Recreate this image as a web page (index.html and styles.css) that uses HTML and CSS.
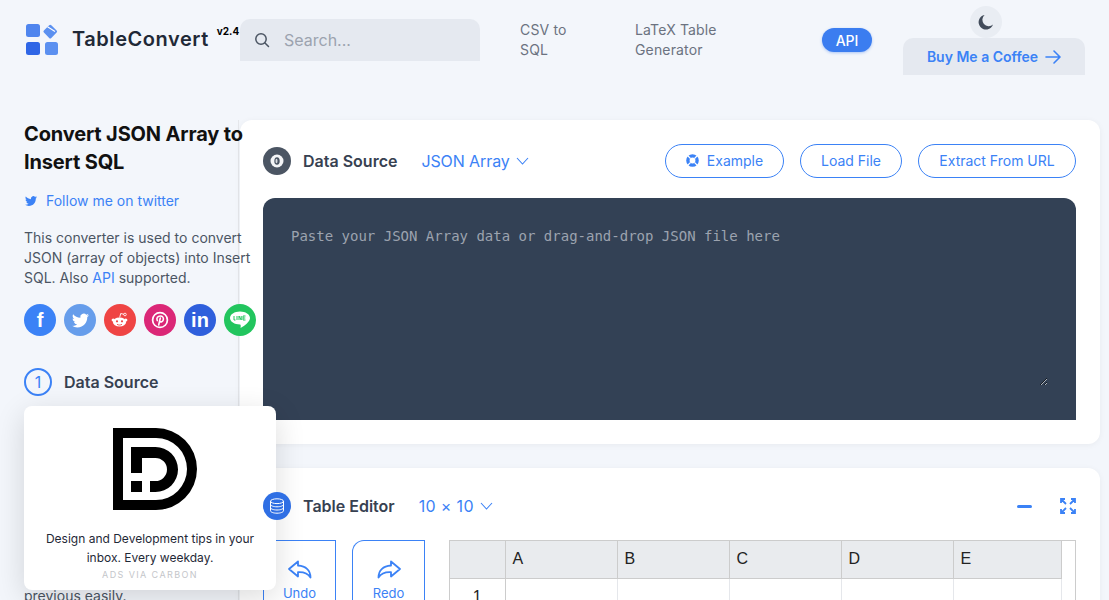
FILE: index.html
```html
<!DOCTYPE html>
<html lang="en">
<head>
<meta charset="utf-8">
<title>Convert JSON Array to Insert SQL</title>
<link rel="stylesheet" href="styles.css">
</head>
<body>
<header class="topbar">
  <a class="brand">
    <svg class="brand-logo" width="32" height="32" viewBox="0 0 32 32">
      <rect x="0" y="0" width="14" height="13" rx="2.5" fill="#4f85ee"/>
      <rect x="19" y="2.300" width="10.500" height="10.500" rx="1.500" fill="#5b90f0" transform="rotate(45 24.250 7.550)"/>
      <path d="M21.500 2.800l7.500 4.700" stroke="#fff" stroke-width="1.100"/>
      <rect x="0" y="18" width="14" height="13" rx="2.5" fill="#2f66e6"/>
      <rect x="19" y="18" width="13" height="13" rx="2.5" fill="#5b90f0"/>
    </svg>
    <span class="brand-name">TableConvert</span>
    <sup class="brand-version">v2.4</sup>
  </a>
  <div class="search">
    <svg width="16" height="16" viewBox="0 0 16 16" fill="none" stroke="#4b5563" stroke-width="1.5" stroke-linecap="round"><circle cx="7" cy="7" r="5.2"/><path d="M11 11l3.5 3.5"/></svg>
    <span class="search-text">Search...</span>
  </div>
  <nav class="nav">
    <a class="nav-link nav-csv">CSV to SQL</a>
    <a class="nav-link nav-latex">LaTeX Table Generator</a>
    <a class="api-pill">API</a>
  </nav>
  <div class="top-actions">
    <span class="moon">
      <svg width="16" height="16" viewBox="0 0 16 16"><path fill="#414b5a" d="M6.600.9A7.400 7.400 0 1 0 15 10.600a6.200 6.200 0 0 1-8.400-9.700z"/></svg>
    </span>
    <a class="coffee">Buy Me a Coffee
      <svg width="16" height="14" viewBox="0 0 16 14" fill="none" stroke="#3b82f6" stroke-width="1.6" stroke-linecap="round" stroke-linejoin="round"><path d="M1 7h13.500M9 1l6 6-6 6"/></svg>
    </a>
  </div>
</header>

<div class="page">
  <aside class="side">
    <h1 class="side-title">Convert JSON Array to Insert SQL</h1>
    <a class="follow">
      <svg width="12" height="12" viewBox="0 0 24 24"><path fill="#3b82f6" d="M23.953 4.57a10 10 0 01-2.825.775 4.958 4.958 0 002.163-2.723c-.951.555-2.005.959-3.127 1.184a4.92 4.92 0 00-8.384 4.482C7.69 8.095 4.067 6.13 1.64 3.162a4.822 4.822 0 00-.666 2.475c0 1.71.87 3.213 2.188 4.096a4.904 4.904 0 01-2.228-.616v.06a4.923 4.923 0 003.946 4.827 4.996 4.996 0 01-2.212.085 4.936 4.936 0 004.604 3.417 9.867 9.867 0 01-6.102 2.105c-.39 0-.779-.023-1.17-.067a13.995 13.995 0 007.557 2.209c9.053 0 13.998-7.496 13.998-13.985 0-.21 0-.42-.015-.63A9.935 9.935 0 0024 4.59z"/></svg>
      Follow me on twitter
    </a>
    <p class="intro">This converter is used to convert JSON (array of objects) into Insert SQL. Also <a class="intro-link">API</a> supported.</p>
    <div class="socials">
      <a class="social social-fb">f</a>
      <a class="social social-tw"><svg width="17" height="17" viewBox="0 0 24 24"><path fill="#fff" d="M23.953 4.57a10 10 0 01-2.825.775 4.958 4.958 0 002.163-2.723c-.951.555-2.005.959-3.127 1.184a4.92 4.92 0 00-8.384 4.482C7.69 8.095 4.067 6.13 1.64 3.162a4.822 4.822 0 00-.666 2.475c0 1.71.87 3.213 2.188 4.096a4.904 4.904 0 01-2.228-.616v.06a4.923 4.923 0 003.946 4.827 4.996 4.996 0 01-2.212.085 4.936 4.936 0 004.604 3.417 9.867 9.867 0 01-6.102 2.105c-.39 0-.779-.023-1.17-.067a13.995 13.995 0 007.557 2.209c9.053 0 13.998-7.496 13.998-13.985 0-.21 0-.42-.015-.63A9.935 9.935 0 0024 4.59z"/></svg></a>
      <a class="social social-rd"><svg width="20" height="20" viewBox="0 0 20 20"><ellipse cx="9.500" cy="12" rx="6.600" ry="4.600" fill="#fff"/><circle cx="3.200" cy="10" r="1.600" fill="#fff"/><circle cx="15.800" cy="10" r="1.600" fill="#fff"/><circle cx="7" cy="11.300" r="1.100" fill="#ef4444"/><circle cx="12" cy="11.300" r="1.100" fill="#ef4444"/><path d="M7 14.300c1.500 1 3.500 1 5 0" stroke="#ef4444" stroke-width=".9" fill="none"/><path d="M9.700 7.500l1-4 3.300.8" stroke="#fff" stroke-width=".9" fill="none"/><circle cx="15" cy="4.500" r="1.300" fill="none" stroke="#fff" stroke-width=".8"/></svg></a>
      <a class="social social-pin"><svg width="18" height="18" viewBox="0 0 18 18" fill="none" stroke="#fff"><circle cx="9" cy="9" r="7.400" stroke-width="1.700"/><path d="M7.700 14l1.600-7M6.300 9.600C5 7 7 5 9.300 5c2.300 0 3.500 1.700 3 3.800-.5 2-2.400 2.700-3.800 1.500" stroke-width="1.600" stroke-linecap="round"/></svg></a>
      <a class="social social-in">in</a>
      <a class="social social-line"><svg width="22" height="20" viewBox="0 0 22 20"><path fill="#fff" d="M11 1.500c5.500 0 10 2.900 10 6.500 0 3.500-5 7.500-9.500 10 .4-1.500.4-3.500-.5-3.500-5.500 0-10-2.900-10-6.500s4.500-6.500 10-6.500z"/><path d="M5 6v4h1.500M8 6v4M10 10V6l2.200 4V6M16.500 6H14v4h2.500M14 8h2.300" stroke="#22c55e" stroke-width="1" fill="none"/></svg></a>
    </div>
    <div class="step">
      <span class="step-num">1</span>
      <span class="step-title">Data Source</span>
    </div>
    <p class="step-note">previous easily.</p>
  </aside>

  <main class="main">
    <section class="card card-source">
      <div class="card-head">
        <span class="round round-dark">
          <svg width="16" height="16" viewBox="0 0 16 16"><circle cx="8" cy="8" r="6.500" fill="#f4f5f7"/><ellipse cx="8" cy="8" rx="2.700" ry="3.800" fill="#4b5563"/><ellipse cx="7.500" cy="8" rx="1" ry="2.200" fill="#d9dce1"/></svg>
        </span>
        <h2 class="card-title">Data Source</h2>
        <a class="picker picker-json">JSON Array
          <svg width="13" height="8" viewBox="0 0 13 8" fill="none" stroke="#3b82f6" stroke-width="1.100"><path d="M1 1l5.500 6L12 1"/></svg>
        </a>
        <div class="card-actions">
          <a class="pill pill-example">
            <svg width="13" height="13" viewBox="0 0 13 13"><circle cx="6.500" cy="6.500" r="4.600" fill="none" stroke="#3b82f6" stroke-width="3.400"/><path d="M1.500 1.500l3 3M11.500 1.500l-3 3M1.500 11.500l3-3M11.500 11.500l-3-3" stroke="#fff" stroke-width="1.200"/></svg>
            Example</a>
          <a class="pill pill-load">Load File</a>
          <a class="pill pill-url">Extract From URL</a>
        </div>
      </div>
      <div class="editor">
        <textarea class="editor-input" placeholder="Paste your JSON Array data or drag-and-drop JSON file here"></textarea>
      </div>
    </section>

    <section class="card card-table">
      <div class="card-head card-head-table">
        <span class="round round-blue">
          <svg width="16" height="16" viewBox="0 0 16 16" fill="none" stroke="#fff" stroke-width="1"><ellipse cx="8" cy="3.200" rx="6.500" ry="2.400"/><path d="M1.500 3.200v9.600c0 1.300 2.900 2.400 6.500 2.400s6.500-1.100 6.500-2.400V3.200M1.500 6.400c0 1.300 2.900 2.400 6.500 2.400s6.500-1.100 6.500-2.400M1.500 9.600c0 1.300 2.900 2.400 6.500 2.400s6.500-1.100 6.500-2.400"/></svg>
        </span>
        <h2 class="card-title">Table Editor</h2>
        <a class="picker picker-size">10 × 10
          <svg width="13" height="8" viewBox="0 0 13 8" fill="none" stroke="#3b82f6" stroke-width="1.100"><path d="M1 1l5.500 6L12 1"/></svg>
        </a>
        <div class="table-tools">
          <span class="tool-minus"></span>
          <svg width="16" height="16" viewBox="0 0 16 16" fill="none" stroke="#3b82f6" stroke-width="1.800"><path d="M1 5V1h4M1 1l5 5M11 1h4v4M15 1l-5 5M1 11v4h4M1 15l5-5M15 11v4h-4M15 15l-5-5"/></svg>
        </div>
      </div>
      <div class="table-body">
        <div class="history">
          <a class="history-btn">
            <svg width="26" height="20" viewBox="0 0 26 20" fill="none" stroke="#3b82f6" stroke-width="1.800" stroke-linejoin="round"><path d="M11 1.500L2 9l9 7.500v-4.300c5-.3 9.500.6 12.500 5.300 0-7-4.500-11.500-12.500-12z"/></svg>
            <span>Undo</span>
          </a>
          <a class="history-btn">
            <svg width="26" height="20" viewBox="0 0 26 20" fill="none" stroke="#3b82f6" stroke-width="1.800" stroke-linejoin="round"><path d="M15 1.500L24 9l-9 7.500v-4.300c-5-.3-9.500.6-12.500 5.300 0-7 4.500-11.500 12.500-12z"/></svg>
            <span>Redo</span>
          </a>
        </div>
        <div class="sheet">
          <table class="grid">
            <thead>
              <tr><th class="corner"></th><th>A</th><th>B</th><th>C</th><th>D</th><th class="last">E</th></tr>
            </thead>
            <tbody>
              <tr><th class="rownum">1</th><td></td><td></td><td></td><td></td><td class="last"></td></tr>
            </tbody>
          </table>
        </div>
      </div>
    </section>
  </main>
</div>

<div class="ad">
  <svg class="ad-logo" width="84" height="82" viewBox="0 0 84 82">
    <path fill="#000" fill-rule="evenodd" d="M0 0H43A41 41 0 0 1 43 82H0ZM10 10V72H43A31 31 0 0 0 43 10Z"/>
    <path fill="#000" d="M18 19H42.500A22.500 22.500 0 0 1 42.500 64H37V53H42.500A11.500 11.500 0 0 0 42.500 30H29V45H18Z"/>
    <rect x="18" y="53" width="11" height="11" fill="#000"/>
  </svg>
  <p class="ad-text">Design and Development tips in your inbox. Every weekday.</p>
  <p class="ad-via">ads via Carbon</p>
</div>
</body>
</html>
```

FILE: styles.css
```css
* { box-sizing: border-box; }
html, body { margin: 0; height: 600px; overflow: hidden; }
body {
  position: relative;
  background: #f3f6fb;
  font-family: Inter, "Liberation Sans", sans-serif;
  color: #1f2937;
  font-size: 14px;
}
h1, h2, p { margin: 0; }

/* top bar */
.topbar { display: flex; height: 120px; padding-left: 26px; }
.brand { display: flex; align-items: flex-start; width: 214px; padding-top: 24px; }
.brand-logo { flex: none; }
.brand-name { margin-left: 14px; margin-top: 3px; font-size: 20px; line-height: 24px; font-weight: 600; letter-spacing: .55px; color: #1f2937; }
.brand-version { margin-left: 8px; margin-top: 0; font-size: 10px; line-height: 14px; font-weight: 700; color: #000; }
.search {
  display: flex; align-items: center; gap: 14px;
  width: 240px; height: 42px; margin-top: 19px; padding-left: 14px;
  background: #e5e9f0; border-radius: 10px 10px 0 0;
}
.search-text { font-size: 16px; color: #9ca3af; }
.nav { display: flex; align-items: flex-start; }
.nav-link { font-size: 14px; line-height: 20px; color: #6b7280; margin-top: 20px; letter-spacing: .15px; }
.nav-csv { width: 60px; margin-left: 40px; }
.nav-latex { width: 100px; margin-left: 55px; }
.api-pill {
  margin-left: 87px; margin-top: 28px; width: 50px; height: 24px;
  display: flex; align-items: center; justify-content: center;
  background: #3b7df0; color: #fff; border-radius: 12px; font-size: 14px; font-weight: 500;
  box-shadow: 0 1px 3px rgba(59,125,240,.4);
}
.top-actions { display: flex; flex-direction: column; align-items: center; margin-left: 31px; padding-top: 6px; width: 182px; }
.moon {
  width: 32px; height: 32px; border-radius: 50%; background: #e9edf3; margin-right: 16px;
  display: flex; align-items: center; justify-content: center;
}
.coffee {
  display: flex; align-items: center; justify-content: center; gap: 7px;
  width: 182px; height: 37px; background: #e5e9f0; border-radius: 10px 10px 0 0;
  color: #3b82f6; font-size: 14px; font-weight: 600;
}

/* page */
.page { display: flex; align-items: flex-start; }
.side {
  position: relative; z-index: 2;
  flex: none; width: 256px; margin-right: -18px; padding-left: 24px;
}
.side-title { width: 232px; font-size: 20px; line-height: 28px; font-weight: 700; letter-spacing: -.15px; color: #111; }
.follow { display: flex; align-items: center; gap: 9px; margin-top: 15px; line-height: 20px; color: #3b82f6; }
.follow svg { margin-left: 1px; }
.intro { margin-top: 17px; line-height: 20px; color: #4b5563; }
.intro-link { color: #3b82f6; }
.socials { display: flex; gap: 8px; margin-top: 16px; }
.social {
  flex: none; width: 32px; height: 32px; border-radius: 50%;
  display: flex; align-items: center; justify-content: center;
  color: #fff; font-weight: 700; font-size: 20px; font-family: "Liberation Sans", sans-serif;
}
.social-fb { background: #3b82f6; }
.social-tw { background: #669deb; }
.social-rd { background: #ef4444; }
.social-pin { background: #db2777; }
.social-in { background: #2f5fdc; }
.social-line { background: #22c55e; }
.step { display: flex; align-items: center; gap: 12px; margin-top: 32px; }
.step-num {
  width: 28px; height: 28px; border-radius: 50%; border: 2px solid #3b82f6;
  display: flex; align-items: center; justify-content: center;
  color: #3b82f6; font-size: 16px;
}
.step-title { font-size: 16px; font-weight: 600; color: #374151; }
.step-note { margin-top: 190px; line-height: 20px; color: #4b5563; }

.main {
  flex: none; width: 862px; padding-left: 1px;
  border-left: 1px solid #e5e7eb;
  display: flex; flex-direction: column; gap: 24px;
}
.card { background: #fff; border-radius: 12px; padding: 24px 24px 24px 23px; box-shadow: 0 1px 6px rgba(0,0,0,.05); }
.card-head { display: flex; align-items: center; height: 34px; }
.round {
  flex: none; width: 28px; height: 28px; border-radius: 50%;
  display: flex; align-items: center; justify-content: center;
}
.round-dark { background: #4b5563; }
.round-blue { background: #2f6fe4; position: relative; z-index: 4; }
.card-title { margin-left: 12px; font-size: 16px; font-weight: 600; color: #374151; }
.picker { display: flex; align-items: center; gap: 6px; font-size: 16px; color: #3b82f6; }
.picker-json { margin-left: 24px; letter-spacing: -.1px; }
.picker-size { margin-left: 24px; letter-spacing: .35px; }
.card-actions { display: flex; gap: 16px; margin-left: auto; }
.pill {
  display: flex; align-items: center; justify-content: center; gap: 8px;
  height: 34px; padding-bottom: 1px; border: 1px solid #3b82f6; border-radius: 17px; color: #3b82f6; font-size: 14px;
}
.pill-example { width: 119px; }
.pill-load { width: 102px; }
.pill-url { width: 158px; }
.editor { margin-top: 20px; height: 222px; padding: 28px 28px 34px; background: #334155; border-radius: 12px 12px 0 0; }
.editor-input {
  display: block; width: 100%; height: 160px; padding: 0; margin: 0;
  background: transparent; border: 0; outline: 0; color-scheme: dark;
  font-family: "DejaVu Sans Mono", monospace; font-size: 14px; line-height: 20px; color: #d1d5db;
}
.editor-input::placeholder { color: #9ca3af; opacity: 1; }

.card-head-table { height: 28px; }
.table-tools { display: flex; align-items: center; gap: 28px; margin-left: auto; }
.tool-minus { width: 15px; height: 3px; border-radius: 2px; background: #3b82f6; }
.table-body { display: flex; margin-top: 20px; }
.history { display: flex; gap: 16px; flex: none; width: 186px; }
.history-btn {
  display: flex; flex-direction: column; align-items: center; gap: 5px;
  width: 73px; height: 90px; padding-top: 19px;
  border: 1px solid #3b82f6; border-bottom: 0; border-radius: 12px 0 0 0;
  color: #3b82f6; font-size: 13px; line-height: 16px;
}
.sheet { flex: 1; height: 90px; border: 1px solid #ccc; border-bottom: 0; overflow: hidden; }
.grid { border-collapse: collapse; table-layout: fixed; width: 611px; font-family: "Liberation Sans", sans-serif; font-size: 16px; color: #222; }
.grid th, .grid td { border: 1px solid #ccc; border-top: 0; width: 112px; height: 37px; padding: 0 7px; }
.grid thead th { background: #e9ebee; text-align: left; font-weight: 400; }
.grid td { border-color: #e5e7eb; }
.grid .corner, .grid .rownum { width: 55px; border-left: 0; }
.grid .rownum { text-align: center; vertical-align: top; padding-top: 9px; font-weight: 400; background: #fff; height: 40px; }
.grid .last { width: 108px; }

/* ad */
.ad {
  position: absolute; left: 24px; top: 406px; z-index: 3;
  width: 252px; height: 184px; background: #fff; border-radius: 8px;
  display: flex; flex-direction: column; align-items: center;
  box-shadow: 0 8px 30px rgba(0,0,0,.14);
  padding: 22px 16px 0;
}
.ad-logo { flex: none; margin-left: 10px; }
.ad-text { margin-top: 19px; text-align: center; font-size: 12px; line-height: 19px; color: #1f2937; }
.ad-via { margin-top: 2px; font-size: 9px; line-height: 12px; letter-spacing: 1.4px; text-transform: uppercase; color: #c4c6ca; }
```
